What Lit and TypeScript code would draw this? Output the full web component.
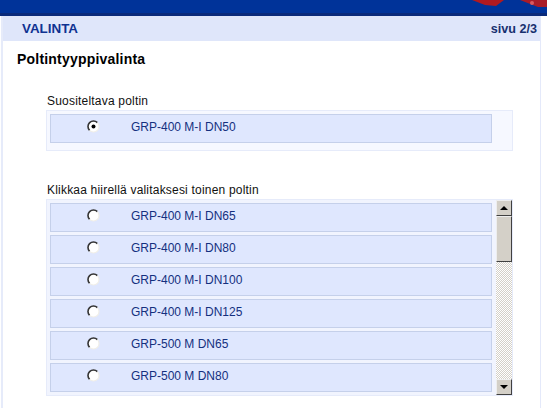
import { LitElement, html, css, svg } from "lit";
import { customElement } from "lit/decorators.js";

const others = ["GRP-400 M-I DN65", "GRP-400 M-I DN80", "GRP-400 M-I DN100", "GRP-400 M-I DN125", "GRP-500 M DN65", "GRP-500 M DN80"];

@customElement("app-root")
export class AppRoot extends LitElement {
  static styles = css`
    :host { display: block; width: 547px; height: 408px; overflow: hidden; background: #fff; font-family: "Liberation Sans", Arial, sans-serif; font-size: 12px; color: #000; }
    .top { height: 13px; background: #003399; border-bottom: 3px solid #0a2a7a; position: relative; overflow: hidden; }
    .logo { position: absolute; left: 470px; top: 0; }
    .page { margin: 0 6px 0 3px; }
    .wrap { border-left: 2px solid #e6ebfa; border-right: 1px solid #e4e9fa; height: 392px; margin-left: -2px; box-sizing: border-box; }
    .head { height: 25px; background: #dfe6fa; display: flex; justify-content: space-between; align-items: center; padding: 0 3px 0 19px; font-weight: bold; color: #0f3291; }
    .head .t { font-size: 13.4px; }
    .head .p { font-size: 12.6px; color: #17306f; }
    h1 { font-size: 14px; font-weight: bold; margin: 11px 0 0 14px; line-height: 14px; letter-spacing: 0.2px; color: #000; }
    .label { margin: 0 0 0 44px; font-size: 12px; line-height: 13px; letter-spacing: 0.2px; color: #111; }
    .l1 { margin-top: 29px; }
    .l2 { margin-top: 33px; }
    .box { margin: 2px 0 0 43px; width: 467px; box-sizing: border-box; border: 1px solid #e6ebfa; background: #f6f8ff; padding: 3px 3px 7px 3px; display: flex; gap: 4px; }
    .box.list { height: 197px; padding: 3px 0 0 3px; margin-top: 2px; background: #f1f4fe; overflow: hidden; }
    .rows { display: flex; flex-direction: column; gap: 3px; }
    .row { width: 442px; height: 29px; box-sizing: border-box; border: 1px solid #c5d0ea; background: #dfe7fe; display: flex; align-items: center; position: relative; color: #14307f; font-size: 12px; }
    .radio { position: absolute; left: 36px; top: 5px; width: 13px; height: 13px; }
    .name { margin-left: 80px; margin-top: -4px; }
    .sb { width: 16px; height: 195px; flex: none; margin: -3px 0 0 0; display: flex; flex-direction: column; background-image: repeating-conic-gradient(#d4d0c8 0 25%, #fff 0 50%); background-size: 2px 2px; }
    .btn { width: 16px; height: 16px; box-sizing: border-box; background: #d4d0c8; border: 1px solid; border-color: #eee #404040 #404040 #eee; display: flex; align-items: center; justify-content: center; flex: none; }
    .thumb { width: 16px; height: 46px; box-sizing: border-box; background: #d4d0c8; border: 1px solid; border-color: #eee #404040 #404040 #eee; flex: none; }
    .fill { flex: 1; }
    .btn i { width: 0; height: 0; border-left: 4px solid transparent; border-right: 4px solid transparent; }
    .up i { border-bottom: 4px solid #000; }
    .down i { border-top: 4px solid #000; }
  `;

  private radio(on: boolean) {
    return html`<svg class="radio" viewBox="0 0 13 13">
      <circle cx="6.5" cy="6.5" r="5.5" fill="#fff"/>
      <path d="M10.4 2.6A5.5 5.5 0 0 0 2.6 10.4" fill="none" stroke="#333" stroke-width="1.6"/>
      <path d="M10.4 2.6A5.5 5.5 0 0 1 2.6 10.4" fill="none" stroke="#f0eee8" stroke-width="1.2"/>
      ${on ? svg`<circle cx="6.5" cy="6.5" r="2" fill="#000"/>` : ""}
    </svg>`;
  }

  private row(name: string, on = false) {
    return html`<div class="row">${this.radio(on)}<span class="name">${name}</span></div>`;
  }

  render() {
    return html`
      <div class="top">
        <svg class="logo" width="77" height="13" viewBox="0 0 77 13">
          <path d="M2 0H34L26 6L15 5Z" fill="#b01a20"/>
          <path d="M50 0H77V7L68 7Z" fill="#a81c28"/>
          <circle cx="62" cy="3" r="2" fill="#d85a60"/>
        </svg>
      </div>
      <div class="page"><div class="wrap">
        <div class="head"><span class="t">VALINTA</span><span class="p">sivu 2/3</span></div>
        <h1>Poltintyyppivalinta</h1>
        <div class="label l1">Suositeltava poltin</div>
        <div class="box"><div class="rows">${this.row("GRP-400 M-I DN50", true)}</div></div>
        <div class="label l2">Klikkaa hiirellä valitaksesi toinen poltin</div>
        <div class="box list">
          <div class="rows">${others.map((o) => this.row(o))}</div>
          <div class="sb">
            <div class="btn up"><i></i></div>
            <div class="thumb"></div>
            <div class="fill"></div>
            <div class="btn down"><i></i></div>
          </div>
        </div>
      </div></div>
    `;
  }
}
